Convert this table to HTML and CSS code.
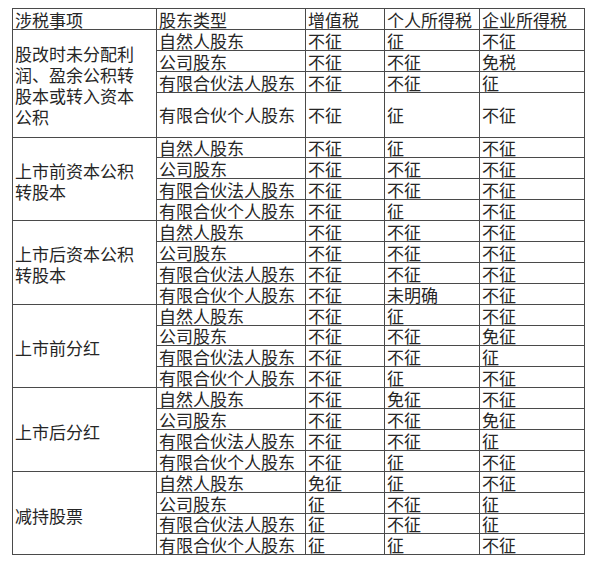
FILE: index.html
```html
<!DOCTYPE html>
<html lang="zh-CN">
<head>
<meta charset="utf-8">
<title>涉税事项</title>
<link rel="stylesheet" href="styles.css">
</head>
<body>
<table class="tax">
  <colgroup>
    <col class="c-item"><col class="c-type"><col class="c-vat"><col class="c-pit"><col class="c-cit">
  </colgroup>
  <thead>
    <tr class="row"><th>涉税事项</th><th>股东类型</th><th>增值税</th><th>个人所得税</th><th>企业所得税</th></tr>
  </thead>
  <tbody>
    <tr class="row"><td class="item" rowspan="4">股改时未分配利<br>润、盈余公积转<br>股本或转入资本<br>公积</td><td>自然人股东</td><td>不征</td><td>征</td><td>不征</td></tr>
    <tr class="row"><td>公司股东</td><td>不征</td><td>不征</td><td>免税</td></tr>
    <tr class="row"><td>有限合伙法人股东</td><td>不征</td><td>不征</td><td>征</td></tr>
    <tr class="row tall"><td>有限合伙个人股东</td><td>不征</td><td>征</td><td>不征</td></tr>

    <tr class="row"><td class="item" rowspan="4">上市前资本公积<br>转股本</td><td>自然人股东</td><td>不征</td><td>征</td><td>不征</td></tr>
    <tr class="row"><td>公司股东</td><td>不征</td><td>不征</td><td>不征</td></tr>
    <tr class="row"><td>有限合伙法人股东</td><td>不征</td><td>不征</td><td>不征</td></tr>
    <tr class="row"><td>有限合伙个人股东</td><td>不征</td><td>征</td><td>不征</td></tr>

    <tr class="row"><td class="item" rowspan="4">上市后资本公积<br>转股本</td><td>自然人股东</td><td>不征</td><td>不征</td><td>不征</td></tr>
    <tr class="row"><td>公司股东</td><td>不征</td><td>不征</td><td>不征</td></tr>
    <tr class="row"><td>有限合伙法人股东</td><td>不征</td><td>不征</td><td>不征</td></tr>
    <tr class="row"><td>有限合伙个人股东</td><td>不征</td><td>未明确</td><td>不征</td></tr>

    <tr class="row"><td class="item" rowspan="4">上市前分红</td><td>自然人股东</td><td>不征</td><td>征</td><td>不征</td></tr>
    <tr class="row"><td>公司股东</td><td>不征</td><td>不征</td><td>免征</td></tr>
    <tr class="row"><td>有限合伙法人股东</td><td>不征</td><td>不征</td><td>征</td></tr>
    <tr class="row"><td>有限合伙个人股东</td><td>不征</td><td>征</td><td>不征</td></tr>

    <tr class="row"><td class="item" rowspan="4">上市后分红</td><td>自然人股东</td><td>不征</td><td>免征</td><td>不征</td></tr>
    <tr class="row"><td>公司股东</td><td>不征</td><td>不征</td><td>免征</td></tr>
    <tr class="row"><td>有限合伙法人股东</td><td>不征</td><td>不征</td><td>征</td></tr>
    <tr class="row"><td>有限合伙个人股东</td><td>不征</td><td>征</td><td>不征</td></tr>

    <tr class="row"><td class="item" rowspan="4">减持股票</td><td>自然人股东</td><td>免征</td><td>征</td><td>不征</td></tr>
    <tr class="row"><td>公司股东</td><td>征</td><td>不征</td><td>征</td></tr>
    <tr class="row"><td>有限合伙法人股东</td><td>征</td><td>不征</td><td>征</td></tr>
    <tr class="row"><td>有限合伙个人股东</td><td>征</td><td>征</td><td>不征</td></tr>
  </tbody>
</table>
</body>
</html>
```

FILE: styles.css
```css
html, body {
  margin: 0;
  padding: 0;
  background: #ffffff;
}

body {
  padding: 8px 0 0 12px;
  font-family: "Noto Sans CJK SC", "Noto Sans", sans-serif;
  color: #262626;
}

.tax {
  border-collapse: collapse;
  table-layout: fixed;
  width: 572px;
  font-size: 17px;
}

.c-item { width: 144px; }
.c-type { width: 149px; }
.c-vat  { width: 79px; }
.c-pit  { width: 95px; }
.c-cit  { width: 105px; }

.tax th,
.tax td {
  border: 1px solid #4a4a4a;
  padding: 0 0 0 2px;
  font-weight: normal;
  text-align: left;
  line-height: 19px;
  vertical-align: bottom;
  white-space: nowrap;
}

.row {
  height: 20.9px;
}

.row.tall {
  height: 45px;
}

.row.tall td {
  vertical-align: middle;
}

.tax td.item {
  vertical-align: middle;
  line-height: 21px;
  padding-top: 4px;
  white-space: normal;
}
```
